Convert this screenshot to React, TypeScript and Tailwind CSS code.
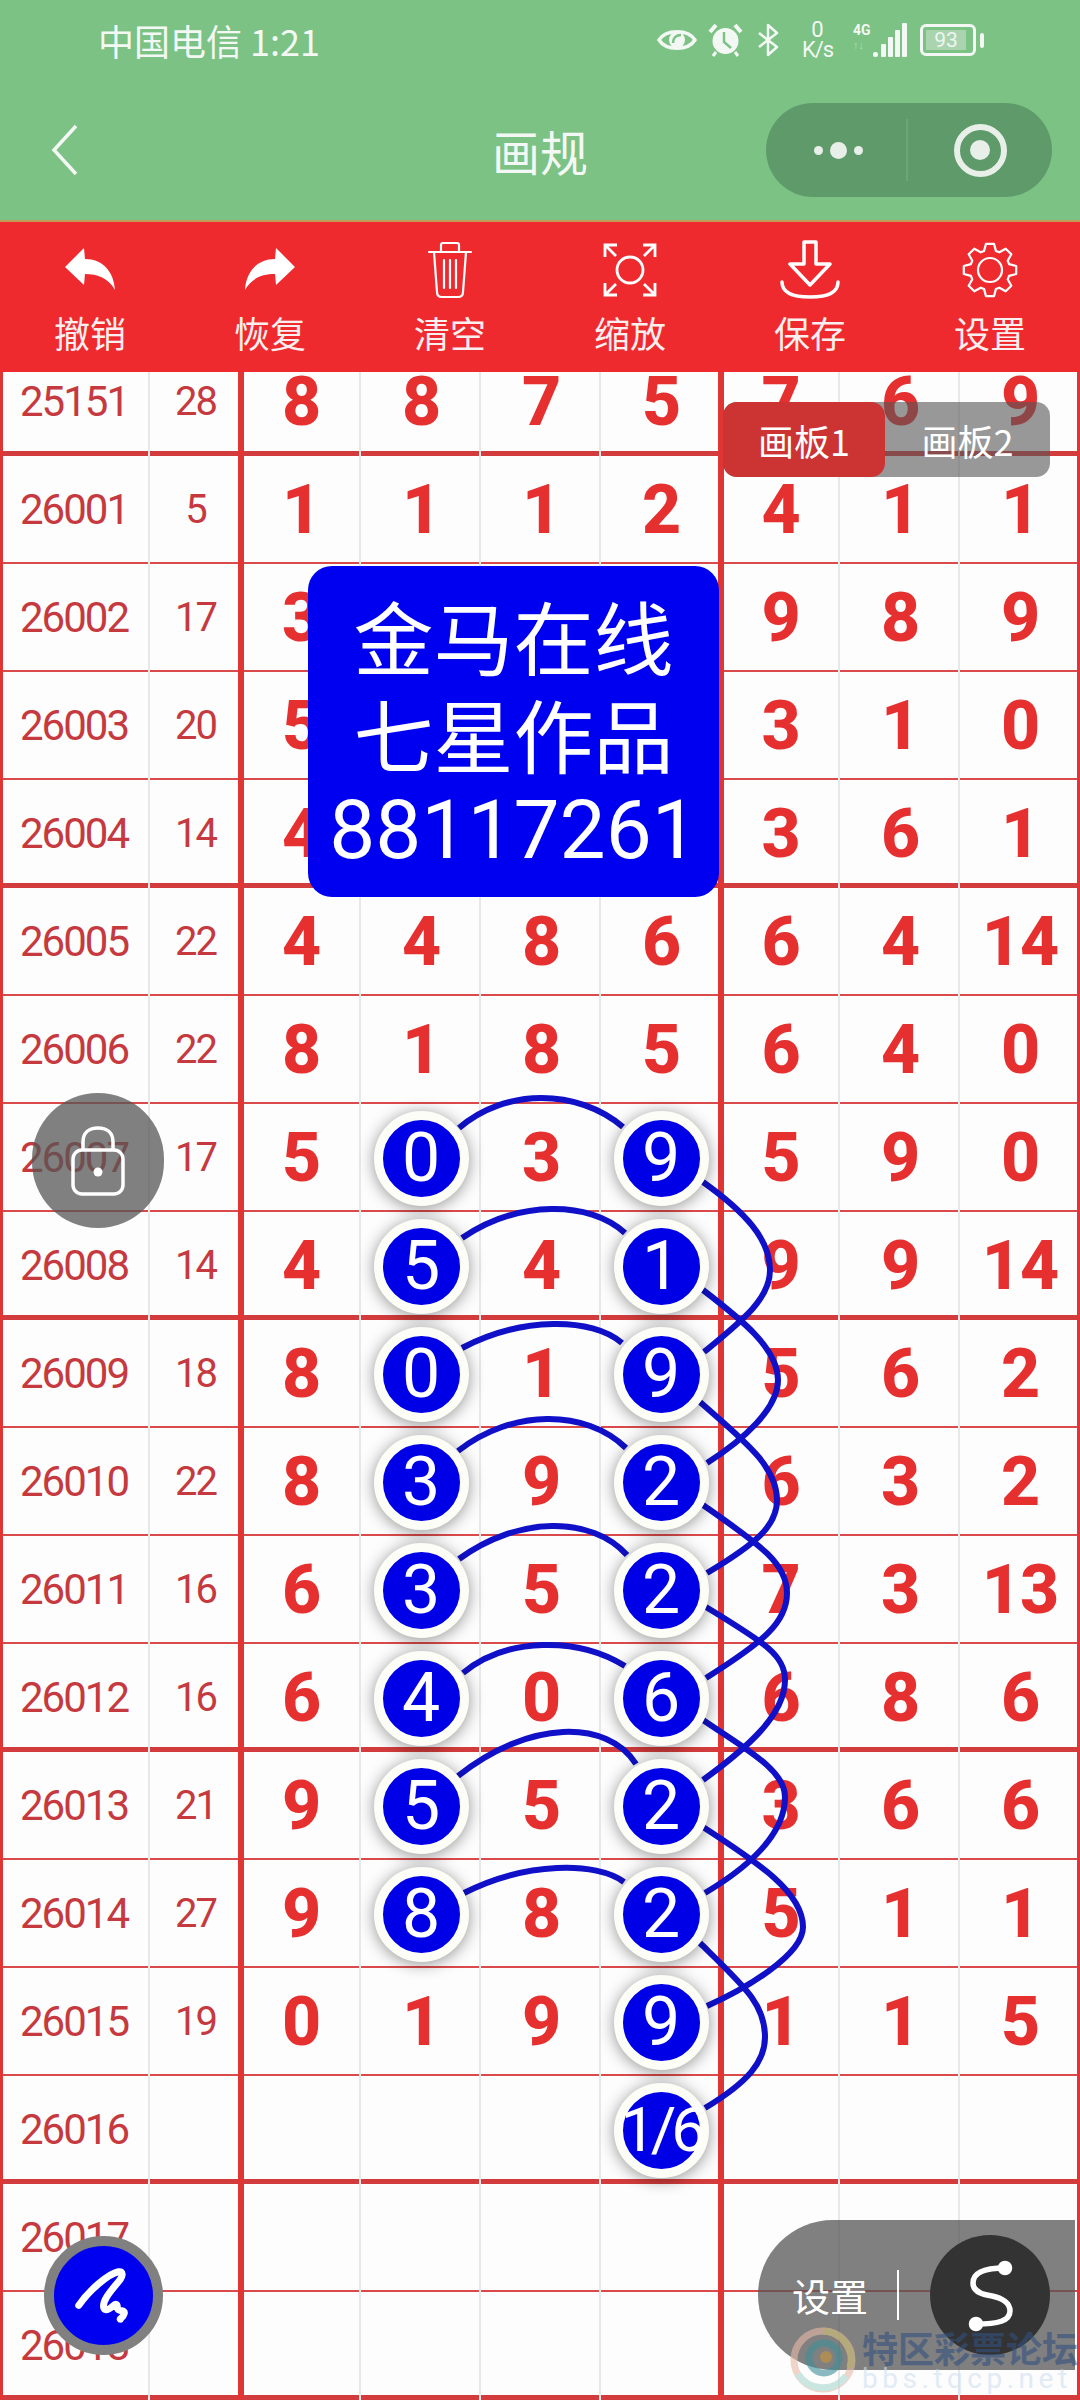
import React from 'react';

const cjk = "font-['Noto_Sans_CJK_SC','Noto_Sans',sans-serif]";
const num = "font-['Roboto',sans-serif]";

type Cell = string | { ball: string };
type Row = { id: string; sum: string; cells: Cell[]; thick?: boolean };

const b = (v: string) => ({ ball: v });

const rows: Row[] = [
  { id: '26001', sum: '5', cells: ['1', '1', '1', '2', '4', '1', '1'] },
  { id: '26002', sum: '17', cells: ['3', '', '', '', '9', '8', '9'] },
  { id: '26003', sum: '20', cells: ['5', '', '', '', '3', '1', '0'] },
  { id: '26004', sum: '14', cells: ['4', '', '', '', '3', '6', '1'], thick: true },
  { id: '26005', sum: '22', cells: ['4', '4', '8', '6', '6', '4', '14'] },
  { id: '26006', sum: '22', cells: ['8', '1', '8', '5', '6', '4', '0'] },
  { id: '26007', sum: '17', cells: ['5', b('0'), '3', b('9'), '5', '9', '0'] },
  { id: '26008', sum: '14', cells: ['4', b('5'), '4', b('1'), '9', '9', '14'], thick: true },
  { id: '26009', sum: '18', cells: ['8', b('0'), '1', b('9'), '5', '6', '2'] },
  { id: '26010', sum: '22', cells: ['8', b('3'), '9', b('2'), '6', '3', '2'] },
  { id: '26011', sum: '16', cells: ['6', b('3'), '5', b('2'), '7', '3', '13'] },
  { id: '26012', sum: '16', cells: ['6', b('4'), '0', b('6'), '6', '8', '6'], thick: true },
  { id: '26013', sum: '21', cells: ['9', b('5'), '5', b('2'), '3', '6', '6'] },
  { id: '26014', sum: '27', cells: ['9', b('8'), '8', b('2'), '5', '1', '1'] },
  { id: '26015', sum: '19', cells: ['0', '1', '9', b('9'), '1', '1', '5'] },
  { id: '26016', sum: '', cells: ['', '', '', b('1/6'), '', '', ''], thick: true },
  { id: '26017', sum: '', cells: ['', '', '', '', '', '', ''] },
  { id: '26018', sum: '', cells: ['', '', '', '', '', '', ''], thick: true },
];

// start, peak, end of each arc across a row
const arcs: number[][][] = [
  [[459, 1128], [541, 1098], [623, 1127]],
  [[462, 1238], [551, 1209], [625, 1233]],
  [[462, 1348], [553, 1324], [622, 1343]],
  [[458, 1451], [547, 1419], [626, 1448]],
  [[459, 1559], [552, 1526], [627, 1555]],
  [[463, 1673], [543, 1645], [625, 1666]],
  [[458, 1776], [563, 1732], [636, 1764]],
  [[464, 1893], [557, 1868], [624, 1882]],
];

// start, start handle, rightmost point, end handle, end
const bows: number[][][] = [
  [[703, 1182], [745, 1212], [770, 1270], [743, 1320], [704, 1352]],
  [[703, 1290], [742, 1320], [778, 1380], [743, 1440], [707, 1463]],
  [[700, 1402], [743, 1440], [777, 1500], [757, 1543], [707, 1573]],
  [[703, 1505], [757, 1543], [787, 1593], [763, 1642], [706, 1678]],
  [[706, 1607], [763, 1642], [785, 1680], [747, 1748], [703, 1780]],
  [[703, 1720], [747, 1750], [785, 1797], [757, 1862], [705, 1893]],
  [[703, 1827], [757, 1862], [803, 1927], [747, 1988], [707, 2006]],
  [[700, 1943], [745, 1987], [765, 2037], [748, 2082], [705, 2108]],
];

function arcPath([s, p, e]: number[][]) {
  const y = (8 * p[1] - s[1] - e[1]) / 6;
  const mid = (8 * p[0] - s[0] - e[0]) / 6;
  const d = 0.22 * (e[0] - s[0]);
  return `M${s[0]} ${s[1]} C${mid - d} ${y} ${mid + d} ${y} ${e[0]} ${e[1]}`;
}

function bowPath([s, a, m, c, e]: number[][]) {
  const up = m[1] - (m[1] - s[1]) * 0.35;
  const down = m[1] + (e[1] - m[1]) * 0.35;
  return `M${s[0]} ${s[1]} C${a[0]} ${a[1]} ${m[0]} ${up} ${m[0]} ${m[1]} C${m[0]} ${down} ${c[0]} ${c[1]} ${e[0]} ${e[1]}`;
}

function gearPath() {
  const pts: string[] = [];
  for (let i = 0; i < 8; i++) {
    const a = (i * Math.PI) / 4 - Math.PI / 2;
    const at = (r: number, o: number) =>
      `${(30 + r * Math.cos(a + o)).toFixed(1)} ${(30 + r * Math.sin(a + o)).toFixed(1)}`;
    pts.push(at(20, -0.3), at(26.5, -0.15), at(26.5, 0.15), at(20, 0.3));
  }
  return 'M' + pts.join(' L') + ' Z';
}

function Ball({ v }: { v: string }) {
  return (
    <div className={`relative z-20 flex h-[95px] w-[95px] items-center justify-center rounded-full border-[9px] border-[#fdfdf8] bg-[#0000e6] font-normal text-white shadow-[0_2px_16px_rgba(0,0,0,0.42)] ${num} ${v.length > 1 ? 'text-[62px] tracking-[-5px]' : 'text-[68px] tracking-normal'} leading-none`}>
      {v}
    </div>
  );
}

function GridRow({ id, sum, cells, thick, first }: Row & { first?: boolean }) {
  const line = thick ? 'shadow-[inset_0_-5px_0_#d33c3c]' : 'shadow-[inset_0_-2px_0_#db4a4a]';
  return (
    <div className={`grid grid-cols-[150px_91px_120px_120px_120px_120px_119px_120px_120px] leading-none ${first ? 'h-[84px] grid-rows-[84px] overflow-hidden' : 'h-[108px] grid-rows-[108px]'} ${line}`}>
      <div className={`flex items-center pl-[20px] text-[42px] tracking-[-2px] text-[#c5393f] shadow-[inset_3px_0_0_#e03535,inset_-2px_0_0_#e8e8e8] ${num} ${first ? 'pb-[24px]' : ''}`}>
        {id}
      </div>
      <div className={`flex items-center justify-center text-[40px] tracking-[-2px] text-[#c5393f] shadow-[3px_0_0_#e03535,inset_-3px_0_0_#e03535] ${num} ${first ? 'pb-[24px]' : ''}`}>
        {sum}
      </div>
      {cells.map((c, i) => (
        <div
          key={i}
          className={`flex items-center justify-center text-[68px] font-extrabold tracking-[-1px] text-[#e63030] ${num} ${first ? 'pb-[24px]' : ''} ${
            i === 3
              ? 'shadow-[3px_0_0_#e03535,inset_-3px_0_0_#e03535]'
              : i === 6
                ? 'shadow-[inset_-3px_0_0_#e03535]'
                : 'shadow-[inset_-2px_0_0_#e8e8e8]'
          }`}
        >
          {typeof c === 'string' ? c : <Ball v={c.ball} />}
        </div>
      ))}
    </div>
  );
}

function ToolItem({ label, children }: { label: string; children: React.ReactNode }) {
  return (
    <div className="flex flex-1 flex-col items-center">
      {children}
      <span className={`mt-[9px] text-[36px] leading-[46px] text-[#fbeeee] ${cjk}`}>{label}</span>
    </div>
  );
}

export default function App() {
  return (
    <div className="relative h-[2400px] w-[1080px] overflow-hidden bg-[#fdfdfd]">
      {/* Status + nav */}
      <div className="h-[222px] border-b-2 border-[#c49a5a] bg-[#7bc284]">
        <div className="flex h-[80px] items-center justify-between pl-[98px] pr-[96px] text-[#f4f8f4]">
          <span className={`text-[36px] leading-none ${cjk}`}>中国电信 1:21</span>
          <div className="flex items-center">
            <svg width="40" height="26" viewBox="0 0 40 26" fill="none">
              <path d="M2 13C9 2 31 2 38 13C31 24 9 24 2 13Z" stroke="#f4f8f4" strokeWidth="3.5" />
              <circle cx="20" cy="13" r="8" fill="#f4f8f4" />
              <path d="M24 8C19 8 16 11 16 16" stroke="#7bc284" strokeWidth="2.5" />
            </svg>
            <svg className="ml-[11px]" width="35" height="34" viewBox="0 0 35 34" fill="none">
              <circle cx="17.5" cy="18" r="13" fill="#f4f8f4" />
              <path d="M16 9V19L23 25" stroke="#7bc284" strokeWidth="2.5" />
              <path d="M2 9L8 2M33 9L27 2" stroke="#f4f8f4" strokeWidth="4" />
              <path d="M8 29L5 33M27 29L30 33" stroke="#f4f8f4" strokeWidth="3" />
            </svg>
            <svg className="ml-[14px]" width="23" height="34" viewBox="0 0 23 34" fill="none" stroke="#f4f8f4" strokeWidth="2.5" strokeLinejoin="round">
              <path d="M2 10L20 24L11 32V2L20 10L2 24" />
            </svg>
            <div className={`ml-[20px] flex w-[35px] flex-col items-center text-[22px] leading-[20px] ${num}`}>
              <span>0</span>
              <span className="tracking-[-1px]">K/s</span>
            </div>
            <div className="ml-[18px] flex h-[34px] w-[54px] items-end">
              <div className="flex h-full w-[19px] flex-col">
                <span className={`text-[14px] font-bold leading-[14px] ${num}`}>4G</span>
                <span className={`mt-[3px] text-[11px] leading-[11px] text-[#b5dcba] ${num}`}>↑↓</span>
              </div>
              <svg width="35" height="34" viewBox="0 0 35 34" fill="#f4f8f4">
                <rect x="1" y="29" width="5" height="5" rx="2" />
                <rect x="9" y="21" width="5" height="13" rx="1" />
                <rect x="16" y="14" width="5" height="20" rx="1" />
                <rect x="23" y="7" width="5" height="27" rx="1" />
                <rect x="30" y="0" width="5" height="34" rx="1" />
              </svg>
            </div>
            <div className="ml-[13px] flex items-center">
              <div className="flex h-[32px] w-[56px] items-center rounded-[6px] border-[3px] border-[#f4f8f4] p-[3px]">
                <div className={`flex h-full w-[40px] items-center justify-center bg-[#a9d4af] text-[21px] leading-none text-[#eef6ef] ${num}`}>93</div>
              </div>
              <div className="ml-[4px] h-[15px] w-[4px] rounded-[2px] bg-[#f4f8f4]" />
            </div>
          </div>
        </div>
        <div className="grid h-[140px] grid-cols-[1fr_auto_1fr] items-center">
          <svg className="ml-[50px]" width="30" height="54" viewBox="0 0 30 54" fill="none">
            <path d="M26 3L4 27L26 51" stroke="#f4f8f4" strokeWidth="3.5" />
          </svg>
          <span className={`text-[48px] leading-none text-[#f4f8f4] ${cjk}`}>画规</span>
          <div className="flex justify-end pr-[28px]">
            <div className="flex h-[94px] w-[286px] items-center rounded-[47px] bg-[#5f9a6a]">
              <div className="flex h-[62px] w-[142px] items-center justify-center gap-[7px] border-r-2 border-[#6ba676] pl-[4px]">
                <span className="h-[9px] w-[9px] rounded-full bg-[#e8efe8]" />
                <span className="h-[17px] w-[17px] rounded-full bg-[#e8efe8]" />
                <span className="h-[9px] w-[9px] rounded-full bg-[#e8efe8]" />
              </div>
              <div className="flex flex-1 items-center justify-center">
                <div className="flex h-[53px] w-[53px] items-center justify-center rounded-full border-[6px] border-[#e8efe8]">
                  <span className="h-[20px] w-[20px] rounded-full bg-[#e8efe8]" />
                </div>
              </div>
            </div>
          </div>
        </div>
      </div>

      {/* Toolbar */}
      <div className="flex h-[150px] bg-[#ee2a2f] pt-[18px]">
        <ToolItem label="撤销">
          <svg width="60" height="60" viewBox="0 0 60 60" fill="#fff">
            <path d="M5 27L24 8L25 19C43 19 54 32 55 50C48 38 38 34 25 34L24 45Z" />
          </svg>
        </ToolItem>
        <ToolItem label="恢复">
          <svg className="-scale-x-100" width="60" height="60" viewBox="0 0 60 60" fill="#fff">
            <path d="M5 27L24 8L25 19C43 19 54 32 55 50C48 38 38 34 25 34L24 45Z" />
          </svg>
        </ToolItem>
        <ToolItem label="清空">
          <svg width="60" height="60" viewBox="0 0 60 60" fill="none" stroke="#fff" strokeWidth="2.2" strokeLinecap="round" strokeLinejoin="round">
            <path d="M9 12H51M21 12V5C21 4 22 3 23 3H37C38 3 39 4 39 5V12" />
            <path d="M14 12L17 52C17 55 19 57 22 57H38C41 57 43 55 43 52L46 12" />
            <path d="M24 20V48M30 20V48M36 20V48" />
          </svg>
        </ToolItem>
        <ToolItem label="缩放">
          <svg width="60" height="60" viewBox="0 0 60 60" fill="none" stroke="#fff" strokeWidth="2.8">
            <circle cx="30" cy="30" r="13" />
            <path d="M5 17V5H17M5 5L16 16" />
            <path d="M55 17V5H43M55 5L44 16" />
            <path d="M5 43V55H17M5 55L16 44" />
            <path d="M55 43V55H43M55 55L44 44" />
          </svg>
        </ToolItem>
        <ToolItem label="保存">
          <svg width="60" height="60" viewBox="0 0 60 60" fill="none" stroke="#fff" strokeWidth="3.5" strokeLinecap="round" strokeLinejoin="round">
            <path d="M24 2H36V24H50L30 45L10 24H24Z" />
            <path d="M2 42C2 52 12 57 30 57C48 57 58 52 58 42" />
          </svg>
        </ToolItem>
        <ToolItem label="设置">
          <svg width="60" height="60" viewBox="0 0 60 60" fill="none" stroke="#fff" strokeWidth="2.2" strokeLinejoin="round">
            <path d={gearPath()} />
            <circle cx="30" cy="30" r="12" />
          </svg>
        </ToolItem>
      </div>

      {/* Table */}
      <div>
        <GridRow first thick id="25151" sum="28" cells={['8', '8', '7', '5', '7', '6', '9']} />
        {rows.map((r) => (
          <GridRow key={r.id} {...r} />
        ))}
      </div>

      {/* Links between the balls */}
      <svg className="pointer-events-none absolute left-0 top-0 z-10 h-[2400px] w-[1080px]" viewBox="0 0 1080 2400" fill="none">
        {arcs.map((c, i) => (
          <path key={i} d={arcPath(c)} stroke="#1010c8" strokeWidth="6" />
        ))}
        {bows.map((c, i) => (
          <path key={i} d={bowPath(c)} stroke="#1010c8" strokeWidth="6" />
        ))}
      </svg>

      {/* Board tabs */}
      <div className={`absolute left-[723px] top-[402px] z-30 flex h-[75px] w-[327px] rounded-[14px] bg-[#555]/60 text-[36px] text-white ${cjk}`}>
        <div className="flex w-[162px] items-center justify-center rounded-[14px] bg-[#cc3333]">画板1</div>
        <div className="flex flex-1 items-center justify-center">画板2</div>
      </div>

      {/* Author card */}
      <div className={`absolute left-[308px] top-[566px] z-30 flex h-[331px] w-[411px] flex-col items-center justify-center rounded-[24px] bg-[#0000f0] text-[80px] leading-[98px] text-white ${cjk}`}>
        <span>金马在线</span>
        <span>七星作品</span>
        <span className={`text-[82px] ${num}`}>88117261</span>
      </div>

      {/* Lock */}
      <div className="absolute left-[32px] top-[1093px] z-30 flex h-[135px] w-[132px] items-center justify-center rounded-full bg-[#555]/75">
        <svg width="56" height="72" viewBox="0 0 56 72" fill="none" stroke="#fff" strokeWidth="3.5">
          <path d="M13 26V17C13 8 19 3 28 3C37 3 43 8 43 17V26" />
          <rect x="3" y="25" width="50" height="44" rx="9" />
          <circle cx="28" cy="47" r="4.5" fill="#fff" stroke="none" />
        </svg>
      </div>

      {/* Pen */}
      <div className="absolute left-[44px] top-[2236px] z-30 flex h-[119px] w-[119px] items-center justify-center rounded-full border-[10px] border-[#808080] bg-[#0000f0]">
        <svg width="99" height="99" viewBox="-50 -50 100 100" fill="none" stroke="#fff" strokeWidth="7" strokeLinecap="round" strokeLinejoin="round">
          <path d="M-25 10C-15 -5 5 -22 15 -24C20 -25 20 -20 16 -15C8 -5 0 3 0 11C0 16 5 15 9 11C13 7 14 9 14 12C14 17 22 14 21 18C20 22 16 24 17 24" />
        </svg>
      </div>

      {/* Settings pill */}
      <div className="absolute left-[758px] top-[2220px] z-30 flex h-[150px] w-[317px] items-center rounded-l-[75px] bg-[#555]/75">
        <span className={`ml-[34px] text-[38px] leading-none text-white ${cjk}`}>设置</span>
        <span className="ml-[29px] h-[50px] w-[2px] bg-white" />
        <div className="ml-[31px] flex h-[120px] w-[120px] items-center justify-center rounded-full bg-[#333]">
          <svg width="80" height="80" viewBox="-40 -40 80 80" fill="none" stroke="#fff" strokeWidth="5.5" strokeLinecap="round">
            <path d="M15 -27C-5 -27 -17 -22 -17 -12C-17 -2 -5 0 2 1C12 3 20 8 20 16C20 26 8 29 -14 29" />
            <circle cx="15" cy="-27" r="4.5" fill="#fff" />
            <circle cx="-14" cy="29" r="4.5" fill="#fff" />
          </svg>
        </div>
      </div>

      {/* Forum watermark */}
      <div className="pointer-events-none absolute left-[788px] top-[2326px] z-40 flex items-center opacity-60">
        <svg width="70" height="68" viewBox="0 0 70 68" fill="none" strokeWidth="7">
          <circle cx="35" cy="34" r="29" stroke="#e8b9a8" />
          <path d="M35 5A29 29 0 0 1 62 42" stroke="#d9c77a" />
          <path d="M10 48A29 29 0 0 0 58 50" stroke="#a8d8cf" />
          <circle cx="36" cy="32" r="15" stroke="#3f8f98" />
          <circle cx="38" cy="31" r="6" fill="#c9973a" stroke="none" />
        </svg>
        <div className="ml-[4px] flex flex-col">
          <span className={`text-[36px] font-bold leading-[38px] text-[#34507f] ${cjk}`}>特区彩票论坛</span>
          <span className={`text-[28px] leading-[26px] tracking-[4.5px] text-[#cfe0f2] ${num}`}>bbs.tqcp.net</span>
        </div>
      </div>
    </div>
  );
}
